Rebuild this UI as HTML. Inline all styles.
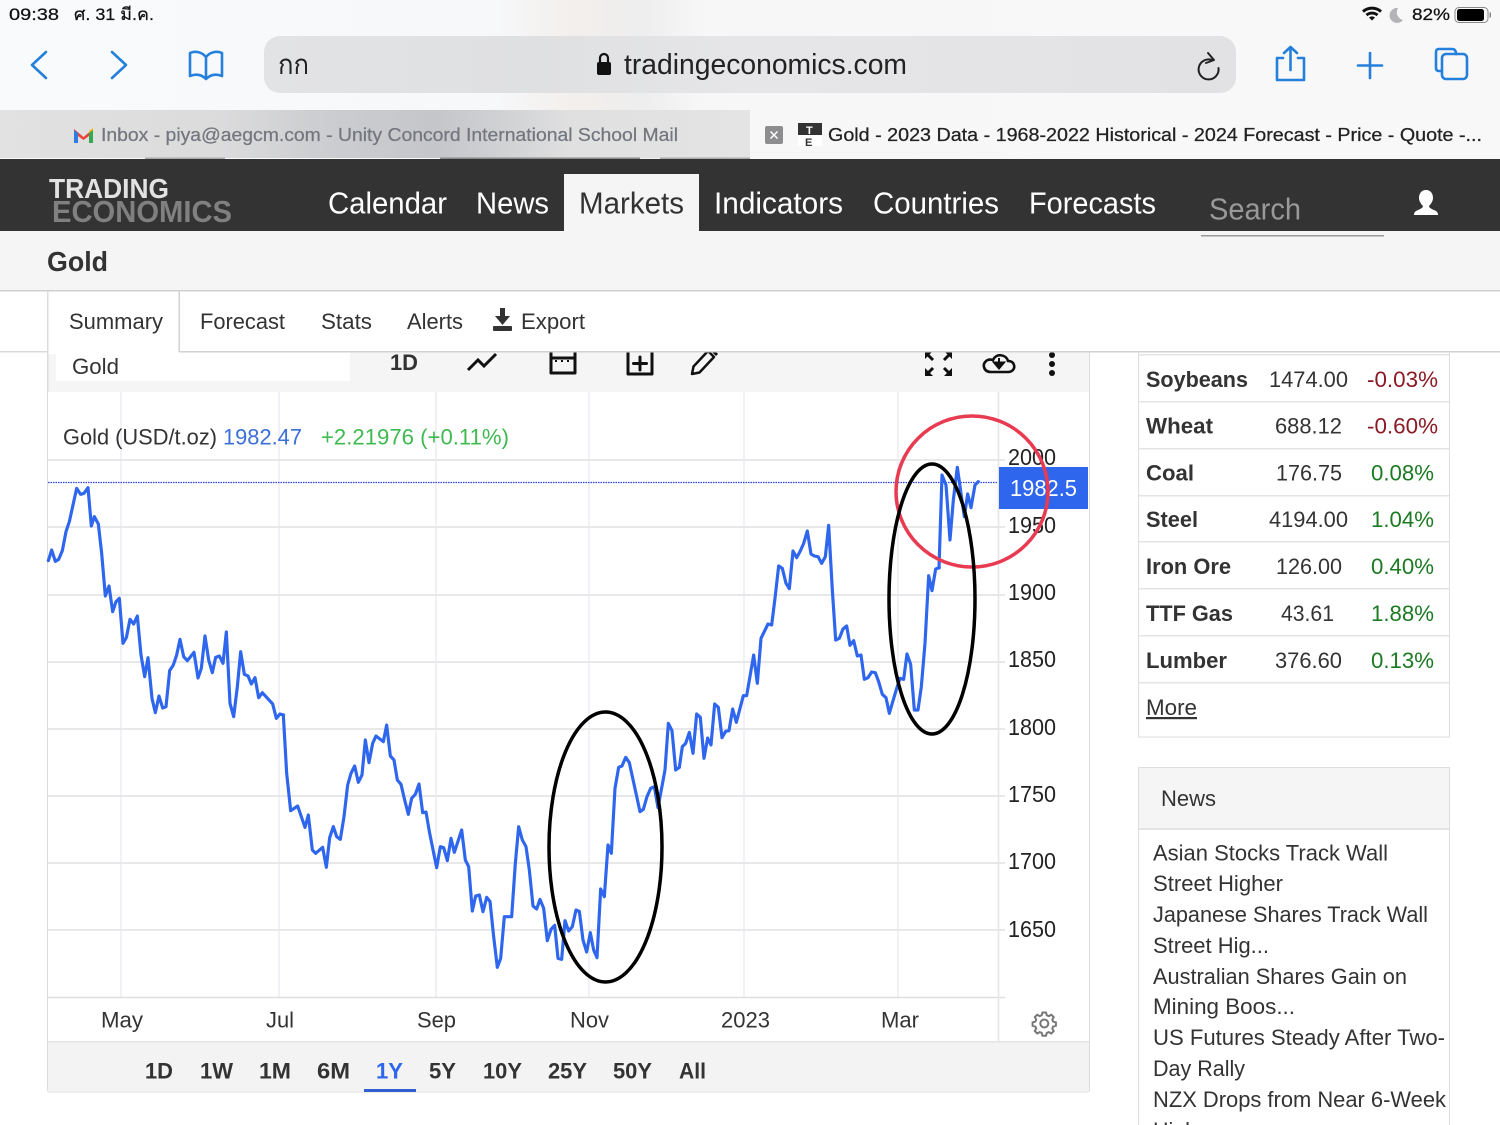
<!DOCTYPE html>
<html lang="th">
<head>
<meta charset="utf-8">
<title>Gold</title>
<style>
html,body{margin:0;padding:0;width:1500px;height:1125px;overflow:hidden;background:#fff}
svg{display:block;font-family:"Liberation Sans","Noto Sans CJK SC",sans-serif}
.r{font-size:22px;fill:#333}
.b{font-size:22px;fill:#333;font-weight:700}
.nav{font-size:31px;fill:#fff}
.ax{font-size:23px;fill:#222}
.red{font-size:22px;fill:#8b1a24}
.grn{font-size:22px;fill:#1c7a22}
.st{font-size:17px;fill:#111;stroke:#111;stroke-width:.25}
.grid{stroke:#e8e8ea;stroke-width:2}
.v{stroke:#f1f1f6;stroke-width:2}
.ic{fill:none;stroke:#2580dc;stroke-width:2.6;stroke-linecap:round;stroke-linejoin:round}
.k{fill:none;stroke:#111;stroke-width:3;stroke-linecap:round;stroke-linejoin:round}
.gl{fill:none;stroke:#2f66ee;stroke-width:9.5;stroke-linejoin:round;stroke-linecap:round}
</style>
</head>
<body>
<svg width="1500" height="1125" viewBox="0 0 1500 1125" xmlns="http://www.w3.org/2000/svg">
<defs>
<linearGradient id="top" x1="0" x2="1" y1="0" y2="0">
<stop offset="0" stop-color="#f8fafc"/><stop offset=".33" stop-color="#f7f8fa"/><stop offset=".38" stop-color="#f3efec"/><stop offset=".43" stop-color="#eeeeee"/><stop offset=".47" stop-color="#f7f7f8"/><stop offset="1" stop-color="#f8f8f9"/>
</linearGradient>
<linearGradient id="bar" x1="0" x2="1" y1="0" y2="0">
<stop offset="0" stop-color="#e2e3e5"/><stop offset=".28" stop-color="#dfe0e2"/><stop offset=".5" stop-color="#e6e6e8"/><stop offset="1" stop-color="#e2e2e4"/>
</linearGradient>
<linearGradient id="tab" x1="0" x2="1" y1="0" y2="0">
<stop offset="0" stop-color="#e2e2e2"/><stop offset=".3" stop-color="#dbdbdc"/><stop offset=".42" stop-color="#cdced1"/><stop offset=".58" stop-color="#c4c6ca"/><stop offset=".68" stop-color="#d2d3d5"/><stop offset=".76" stop-color="#e0e0e1"/><stop offset="1" stop-color="#e4e4e4"/>
</linearGradient>
</defs>

<!-- browser chrome -->
<rect width="1500" height="159" fill="url(#top)"/>
<text class="st" x="9" y="20" textLength="50" lengthAdjust="spacingAndGlyphs">09:38</text>
<text class="st" x="74" y="20" textLength="80" lengthAdjust="spacingAndGlyphs">ศ. 31 มี.ค.</text>
<text class="st" x="1412" y="20" textLength="38" lengthAdjust="spacingAndGlyphs">82%</text>
<path d="M1362 13.5a15 15 0 0 1 20 0l-2 2.2a12 12 0 0 0-16 0zM1365.5 17a10 10 0 0 1 13 0l-2 2.2a7 7 0 0 0-9 0zM1369 20.5a5 5 0 0 1 6 0l-3 3z" fill="#111" transform="translate(0 -3)"/>
<path d="M1398 8a7.5 7.5 0 1 0 5 12a8 8 0 0 1-5-12z" fill="#b4b4b6"/>
<rect x="1455" y="7.500" width="33" height="15" rx="4" fill="none" stroke="#888" stroke-width="1"/>
<rect x="1457" y="9" width="27" height="12" rx="2.500" fill="#000"/>
<rect x="1489.500" y="12.500" width="1.500" height="5" fill="#888"/>

<path class="ic" d="M46 52L32 65L46 78"/>
<path class="ic" d="M112 52L126 65L112 78"/>
<path class="ic" d="M206 57C201 51 194 51 190 53V76C195 74 201 74 206 79C211 74 217 74 222 76V53C218 51 211 51 206 57ZM206 57V78"/>
<rect x="264" y="36" width="972" height="57" rx="16" fill="url(#bar)"/>
<text x="278" y="74" font-size="28" fill="#222" textLength="31" lengthAdjust="spacingAndGlyphs">กก</text>
<rect x="597" y="62" width="14" height="13" rx="2" fill="#111"/>
<path d="M600 62V58a4 4 0 0 1 8 0V62" fill="none" stroke="#111" stroke-width="2.200"/>
<text x="624" y="74" font-size="29" fill="#222" textLength="283" lengthAdjust="spacingAndGlyphs">tradingeconomics.com</text>
<path d="M1212 60A10 10 0 1 0 1218.500 68" fill="none" stroke="#222" stroke-width="2" stroke-linecap="round"/>
<path d="M1208 53L1214 60L1206 63" fill="none" stroke="#222" stroke-width="2" stroke-linecap="round" stroke-linejoin="round"/>
<path class="ic" d="M1283 58H1277V80H1304V58H1298M1290.500 70V47M1284 53L1290.500 47L1297 53"/>
<path class="ic" d="M1370 53V78M1358 65.500H1382"/>
<path class="ic" d="M1441 71H1439Q1436 71 1436 68V52Q1436 49 1439 49H1452Q1456 49 1456 54"/>
<rect class="ic" x="1442" y="54" width="25" height="25" rx="4"/>

<!-- tabs -->
<rect x="0" y="110" width="750" height="48" fill="url(#tab)"/>
<rect x="145" y="157.500" width="80" height="1.500" fill="#aaa"/>
<rect x="440" y="157.500" width="200" height="1.500" fill="#888"/>
<rect x="660" y="157.500" width="90" height="1.500" fill="#aaa"/>
<path d="M74 143V129L83.500 137L93 129V143H89V136L83.500 140L78 136V143Z" fill="#ea4335"/>
<path d="M74 130V143H78V133Z" fill="#2f7de0"/>
<path d="M93 130V143H89V133Z" fill="#34a853"/>
<path d="M89 133L93 130V128L89 131Z" fill="#f9bb05"/>
<text x="101" y="141" font-size="18" fill="#74777e" stroke="#74777e" stroke-width=".25" textLength="577" lengthAdjust="spacingAndGlyphs">Inbox - piya@aegcm.com - Unity Concord International School Mail</text>
<rect x="765" y="126" width="18" height="18" rx="2" fill="#8d8d8f"/>
<path d="M770.500 131.500L777.500 138.500M777.500 131.500L770.500 138.500" stroke="#fff" stroke-width="1.500"/>
<rect x="798" y="123" width="24" height="12" fill="#333"/>
<rect x="798" y="135" width="24" height="11" fill="#fff"/>
<text x="806" y="134" font-size="11" font-weight="700" fill="#fff">T</text>
<text x="805" y="146" font-size="11" font-weight="700" fill="#333">E</text>
<text x="828" y="141" font-size="18" fill="#222" stroke="#222" stroke-width=".25" textLength="654" lengthAdjust="spacingAndGlyphs">Gold - 2023 Data - 1968-2022 Historical - 2024 Forecast - Price - Quote -...</text>

<!-- nav -->
<rect x="0" y="159" width="1500" height="72" fill="#333"/>
<text x="52" y="222" font-size="31" font-weight="700" fill="#808080" textLength="180" lengthAdjust="spacingAndGlyphs">ECONOMICS</text>
<text x="49" y="198" font-size="28" font-weight="700" fill="#e2e2e2" textLength="120" lengthAdjust="spacingAndGlyphs">TRADING</text>
<rect x="564" y="174" width="135" height="57" fill="#f5f5f5"/>
<text class="nav" x="328" y="213.500" textLength="119" lengthAdjust="spacingAndGlyphs">Calendar</text>
<text class="nav" x="476" y="213.500" textLength="73" lengthAdjust="spacingAndGlyphs">News</text>
<text class="nav" x="579" y="213.500" style="fill:#333" textLength="105" lengthAdjust="spacingAndGlyphs">Markets</text>
<text class="nav" x="714" y="213.500" textLength="129" lengthAdjust="spacingAndGlyphs">Indicators</text>
<text class="nav" x="873" y="213.500" textLength="126" lengthAdjust="spacingAndGlyphs">Countries</text>
<text class="nav" x="1029" y="213.500" textLength="127" lengthAdjust="spacingAndGlyphs">Forecasts</text>
<text class="nav" x="1209" y="219.500" style="fill:#999" textLength="92" lengthAdjust="spacingAndGlyphs">Search</text>
<path d="M1426 190c-5 0-7 4-7 8c0 3 2 6 4 8c0 2-3 3-6 4.500c-2 1-3 2-3 4.500h24c0-2.500-1-3.500-3-4.500c-3-1.500-6-2.500-6-4.500c2-2 4-5 4-8c0-4-2-8-7-8z" fill="#fff"/>

<!-- title bar -->
<rect x="0" y="231" width="1500" height="60" fill="#f5f5f5"/>
<rect x="1201" y="235" width="183" height="1.500" fill="#999"/>
<rect x="0" y="290" width="1500" height="1.500" fill="#cfcfcf"/>
<text x="47" y="271" font-size="28" font-weight="700" fill="#333" textLength="61" lengthAdjust="spacingAndGlyphs">Gold</text>

<!-- chart panel -->
<rect x="47.500" y="340" width="1042" height="752" fill="#fff" stroke="#dcdcdc" rx="2"/>
<rect x="48" y="345" width="1041" height="47" fill="#f5f5f5"/>
<rect x="56" y="345" width="294" height="36" fill="#fff"/>
<text class="r" x="72" y="374" textLength="47" lengthAdjust="spacingAndGlyphs">Gold</text>
<text class="b" x="390" y="370" textLength="28" lengthAdjust="spacingAndGlyphs">1D</text>
<path d="M468 370L478 360L484 366L496 354" fill="none" stroke="#111" stroke-width="3"/>
<path d="M551 345V373H575V345M551 358H575" class="k"/>
<path d="M555 361h2M561 361h2M567 361h2" stroke="#111" stroke-width="2"/>
<path d="M628 345V374H652V345" class="k"/>
<path d="M640 357V370M633.500 363.500H646.500" class="k"/>
<path d="M692 374L693.500 366.500L708 351L714 357L699.500 372.500Z" fill="none" stroke="#111" stroke-width="2.500" stroke-linejoin="round"/>
<path d="M711 349L717 355" stroke="#111" stroke-width="3"/>
<g fill="none" stroke="#111" stroke-width="3">
<path d="M927 354L933 360M944 360L950 354"/>
<path d="M933 368L928 373M944 368L949 373"/>
</g>
<g fill="#111">
<path d="M925 352h7l-7 7z"/>
<path d="M952 352h-7l7 7z"/>
<path d="M925 376h8l-8-8z"/>
<path d="M952 376h-8l8-8z"/>
</g>
<path d="M991 372H1008C1013 372 1015 368 1014 365C1013 361 1009 361 1008 361C1006 354 996 353 993 360C986 358 983 364 984 367C985 371 988 372 991 372Z" fill="none" stroke="#111" stroke-width="2.600"/>
<path d="M999 358V366M994 362.500L999 368.500L1004 362.500Z" stroke="#111" stroke-width="2" fill="#111"/>
<circle cx="1052" cy="355" r="3" fill="#111"/><circle cx="1052" cy="364" r="3" fill="#111"/><circle cx="1052" cy="373" r="3" fill="#111"/>

<!-- grid -->
<g>
<line class="v" x1="121" x2="121" y1="392" y2="997"/>
<line class="v" x1="279" x2="279" y1="392" y2="997"/>
<line class="v" x1="436" x2="436" y1="392" y2="997"/>
<line class="v" x1="589" x2="589" y1="392" y2="997"/>
<line class="v" x1="744" x2="744" y1="392" y2="997"/>
<line class="v" x1="898" x2="898" y1="392" y2="997"/>
<line class="grid" x1="48" x2="1005" y1="460" y2="460"/>
<line class="grid" x1="48" x2="1005" y1="527" y2="527"/>
<line class="grid" x1="48" x2="1005" y1="595" y2="595"/>
<line class="grid" x1="48" x2="1005" y1="662" y2="662"/>
<line class="grid" x1="48" x2="1005" y1="729" y2="729"/>
<line class="grid" x1="48" x2="1005" y1="796" y2="796"/>
<line class="grid" x1="48" x2="1005" y1="863" y2="863"/>
<line class="grid" x1="48" x2="1005" y1="930" y2="930"/>
<line x1="48" x2="1005" y1="997.500" y2="997.500" stroke="#dfdfdf" stroke-width="1.500"/>
<line x1="998.500" x2="998.500" y1="392" y2="1041" stroke="#e4e4e4" stroke-width="1.500"/>
<line x1="48" x2="998" y1="482.500" y2="482.500" stroke="#2b3fe0" stroke-width="1.200" stroke-dasharray="1.500 1"/>
</g>

<text class="r" x="63" y="444.500" textLength="154" lengthAdjust="spacingAndGlyphs">Gold (USD/t.oz)</text>
<text class="r" x="223" y="444.500" style="fill:#3a6fd8" textLength="79" lengthAdjust="spacingAndGlyphs">1982.47</text>
<text class="r" x="321" y="444.500" style="fill:#3fba50" textLength="188" lengthAdjust="spacingAndGlyphs">+2.21976 (+0.11%)</text>

<text class="ax" x="1008" y="465" textLength="48" lengthAdjust="spacingAndGlyphs">2000</text>
<text class="ax" x="1008" y="533" textLength="48" lengthAdjust="spacingAndGlyphs">1950</text>
<text class="ax" x="1008" y="600" textLength="48" lengthAdjust="spacingAndGlyphs">1900</text>
<text class="ax" x="1008" y="667" textLength="48" lengthAdjust="spacingAndGlyphs">1850</text>
<text class="ax" x="1008" y="735" textLength="48" lengthAdjust="spacingAndGlyphs">1800</text>
<text class="ax" x="1008" y="802" textLength="48" lengthAdjust="spacingAndGlyphs">1750</text>
<text class="ax" x="1008" y="869" textLength="48" lengthAdjust="spacingAndGlyphs">1700</text>
<text class="ax" x="1008" y="937" textLength="48" lengthAdjust="spacingAndGlyphs">1650</text>
<rect x="999" y="467" width="89" height="42" fill="#2f66ee"/>
<text x="1010" y="496" font-size="23" fill="#fff" textLength="67" lengthAdjust="spacingAndGlyphs">1982.5</text>

<!-- price line -->
<g transform="translate(40 340) scale(.33333)"><polyline class="gl" points="25,662 35,630 46,664 56,658 67,632 78,575 88,545 110,445 122,463 132,460 144,443 154,558 163,530 175,552 185,640 196,768 207,738 218,815 228,785 238,775 249,910 259,893 270,838 281,852 292,828 303,945 314,1010 324,953 336,1075 346,1118 357,1068 368,1104 378,1100 389,992 400,975 410,945 420,898 431,950 442,962 462,937 474,1014 484,985 495,888 506,960 517,998 527,952 538,948 549,970 559,876 570,1090 581,1130 592,1040 602,935 613,1003 624,1008 634,1032 645,1013 656,1073 667,1058 678,1070 698,1092 709,1135 720,1122 731,1125"/></g>
<g transform="translate(280 690) scale(.33333)"><polyline class="gl" points="10,75 20,250 32,362 53,348 75,412 85,375 97,480 107,490 128,472 139,532 149,443 160,410 170,440 181,448 192,380 203,285 213,250 224,228 235,277 246,255 256,150 267,218 278,160 288,138 310,155 320,105 331,198 342,210 352,270 363,283 374,330 385,373 395,325 406,313 417,282 428,368 438,366 449,430 470,533 481,470 491,473 502,512 513,445 523,487 545,420 556,510 566,530 577,663 587,618 598,615 609,665 620,622 630,634 641,740 652,832 662,805 673,680 695,680 706,520 716,410 727,450 738,470 748,540 759,648 770,657 780,628 791,655 802,752 813,718 824,706 834,805 845,808 855,692 866,723 877,710 888,660 898,664 909,750 920,786 931,728 941,780 951,803 962,597 973,620 984,465 994,490 1005,295 1016,232 1026,228 1037,202 1048,218 1080,365 1090,358 1101,320 1112,295 1123,290 1134,353 1155,240 1165,100 1176,122 1187,240 1198,232"/></g>
<g transform="translate(640 500) scale(.33333)"><polyline class="gl" points="118,802 127,740 137,730 148,697 159,760 170,642 181,652 192,775 203,714 213,735 224,612 235,622 246,713 257,694 267,692 278,627 289,667 310,587 320,587 341,465 352,550 363,415 384,372 395,375 405,295 416,198 427,205 438,250 448,266 459,153 470,173 480,155 491,130 502,93 513,162 523,168 534,170 545,190 556,170 566,76 577,270 587,420 598,415 609,387 620,378 630,436 641,422 652,468 663,465 673,538 684,533 695,516 706,518 716,545 727,583 738,593 748,640 770,565 780,535 791,538 801,462 812,493 823,630 834,630 844,560 855,430 866,227 876,272 887,207 898,203"/></g>
<g transform="translate(860 340) scale(.33333)"><polyline class="gl" points="237,684 246,405 258,435 270,600 280,480 292,382 303,460 313,530 323,462 333,503 345,435 355,425"/></g>

<!-- annotations -->
<ellipse cx="972" cy="491.500" rx="76" ry="75.500" fill="none" stroke="#e83a50" stroke-width="3.500"/>
<ellipse cx="932" cy="599" rx="43" ry="135" fill="none" stroke="#000" stroke-width="3.500"/>
<ellipse cx="605.500" cy="847" rx="56.500" ry="135" fill="none" stroke="#000" stroke-width="3.500"/>

<!-- x axis -->
<text class="r" x="101" y="1027.500" textLength="42" lengthAdjust="spacingAndGlyphs">May</text>
<text class="r" x="266" y="1027.500" textLength="28" lengthAdjust="spacingAndGlyphs">Jul</text>
<text class="r" x="417" y="1027.500" textLength="39" lengthAdjust="spacingAndGlyphs">Sep</text>
<text class="r" x="570" y="1027.500" textLength="39" lengthAdjust="spacingAndGlyphs">Nov</text>
<text class="r" x="721" y="1027.500" textLength="49" lengthAdjust="spacingAndGlyphs">2023</text>
<text class="r" x="881" y="1027.500" textLength="38" lengthAdjust="spacingAndGlyphs">Mar</text>
<path d="M1042.500 1012.500h3.500l.8 2.800 2 .8 2.500-1.400 2.400 2.400-1.400 2.500.8 2 2.800.8v3.400l-2.800.8-.8 2 1.400 2.500-2.400 2.400-2.500-1.400-2 .8-.8 2.800h-3.500l-.8-2.800-2-.8-2.500 1.400-2.400-2.400 1.400-2.500-.8-2-2.800-.8v-3.400l2.800-.8.8-2-1.400-2.500 2.400-2.400 2.500 1.400 2-.8z" fill="none" stroke="#777" stroke-width="2"/>
<circle cx="1044.300" cy="1023.500" r="4" fill="none" stroke="#777" stroke-width="2"/>

<!-- range bar -->
<rect x="48" y="1041" width="1041" height="50" fill="#f3f3f3"/>
<rect x="48" y="1041" width="1041" height="1.500" fill="#e4e4e4"/>
<text class="b" x="145" y="1078.500" textLength="28" lengthAdjust="spacingAndGlyphs">1D</text>
<text class="b" x="200" y="1078.500" textLength="33" lengthAdjust="spacingAndGlyphs">1W</text>
<text class="b" x="259" y="1078.500" textLength="32" lengthAdjust="spacingAndGlyphs">1M</text>
<text class="b" x="317" y="1078.500" textLength="33" lengthAdjust="spacingAndGlyphs">6M</text>
<text class="b" x="376" y="1078.500" style="fill:#2f66ee" textLength="27" lengthAdjust="spacingAndGlyphs">1Y</text>
<text class="b" x="429" y="1078.500" textLength="27" lengthAdjust="spacingAndGlyphs">5Y</text>
<text class="b" x="483" y="1078.500" textLength="39" lengthAdjust="spacingAndGlyphs">10Y</text>
<text class="b" x="548" y="1078.500" textLength="39" lengthAdjust="spacingAndGlyphs">25Y</text>
<text class="b" x="613" y="1078.500" textLength="39" lengthAdjust="spacingAndGlyphs">50Y</text>
<text class="b" x="679" y="1078.500" textLength="27" lengthAdjust="spacingAndGlyphs">All</text>
<rect x="364" y="1089" width="52" height="3" fill="#2f5fd0"/>

<!-- right table -->
<rect x="1138.500" y="345" width="311" height="392" fill="#fff" stroke="#dedede"/>
<g fill="#e4e4e4">
<rect x="1139" y="354" width="310" height="1.500"/>
<rect x="1139" y="401" width="310" height="1.500"/>
<rect x="1139" y="448" width="310" height="1.500"/>
<rect x="1139" y="495" width="310" height="1.500"/>
<rect x="1139" y="541" width="310" height="1.500"/>
<rect x="1139" y="588" width="310" height="1.500"/>
<rect x="1139" y="635" width="310" height="1.500"/>
<rect x="1139" y="682" width="310" height="1.500"/>
</g>
<text class="b" x="1146" y="387" textLength="102" lengthAdjust="spacingAndGlyphs">Soybeans</text>
<text class="r" x="1269" y="387" textLength="79" lengthAdjust="spacingAndGlyphs">1474.00</text>
<text class="red" x="1367" y="387" textLength="71" lengthAdjust="spacingAndGlyphs">-0.03%</text>
<text class="b" x="1146" y="433.500" textLength="67" lengthAdjust="spacingAndGlyphs">Wheat</text>
<text class="r" x="1275" y="433.500" textLength="67" lengthAdjust="spacingAndGlyphs">688.12</text>
<text class="red" x="1367" y="433.500" textLength="71" lengthAdjust="spacingAndGlyphs">-0.60%</text>
<text class="b" x="1146" y="480.500" textLength="48" lengthAdjust="spacingAndGlyphs">Coal</text>
<text class="r" x="1276" y="480.500" textLength="66" lengthAdjust="spacingAndGlyphs">176.75</text>
<text class="grn" x="1371" y="480.500" textLength="63" lengthAdjust="spacingAndGlyphs">0.08%</text>
<text class="b" x="1146" y="527" textLength="52" lengthAdjust="spacingAndGlyphs">Steel</text>
<text class="r" x="1269" y="527" textLength="79" lengthAdjust="spacingAndGlyphs">4194.00</text>
<text class="grn" x="1371" y="527" textLength="63" lengthAdjust="spacingAndGlyphs">1.04%</text>
<text class="b" x="1146" y="574" textLength="85" lengthAdjust="spacingAndGlyphs">Iron Ore</text>
<text class="r" x="1276" y="574" textLength="66" lengthAdjust="spacingAndGlyphs">126.00</text>
<text class="grn" x="1371" y="574" textLength="63" lengthAdjust="spacingAndGlyphs">0.40%</text>
<text class="b" x="1146" y="621" textLength="87" lengthAdjust="spacingAndGlyphs">TTF Gas</text>
<text class="r" x="1281" y="621" textLength="53" lengthAdjust="spacingAndGlyphs">43.61</text>
<text class="grn" x="1371" y="621" textLength="63" lengthAdjust="spacingAndGlyphs">1.88%</text>
<text class="b" x="1146" y="668" textLength="81" lengthAdjust="spacingAndGlyphs">Lumber</text>
<text class="r" x="1275" y="668" textLength="67" lengthAdjust="spacingAndGlyphs">376.60</text>
<text class="grn" x="1371" y="668" textLength="63" lengthAdjust="spacingAndGlyphs">0.13%</text>
<text class="r" x="1146" y="715" text-decoration="underline" textLength="51" lengthAdjust="spacingAndGlyphs">More</text>

<!-- news panel -->
<rect x="1138.500" y="767.500" width="311" height="370" fill="#fff" stroke="#dedede"/>
<rect x="1139" y="768" width="310" height="60" fill="#f5f5f5"/>
<rect x="1139" y="828" width="310" height="2" fill="#e4e4e4"/>
<text class="r" x="1161" y="806" textLength="55" lengthAdjust="spacingAndGlyphs">News</text>
<text class="r" x="1153" y="860.500" textLength="235" lengthAdjust="spacingAndGlyphs">Asian Stocks Track Wall</text>
<text class="r" x="1153" y="891" textLength="130" lengthAdjust="spacingAndGlyphs">Street Higher</text>
<text class="r" x="1153" y="922" textLength="275" lengthAdjust="spacingAndGlyphs">Japanese Shares Track Wall</text>
<text class="r" x="1153" y="953" textLength="116" lengthAdjust="spacingAndGlyphs">Street Hig...</text>
<text class="r" x="1153" y="984" textLength="254" lengthAdjust="spacingAndGlyphs">Australian Shares Gain on</text>
<text class="r" x="1153" y="1014" textLength="142" lengthAdjust="spacingAndGlyphs">Mining Boos...</text>
<text class="r" x="1153" y="1045" textLength="292" lengthAdjust="spacingAndGlyphs">US Futures Steady After Two-</text>
<text class="r" x="1153" y="1076" textLength="92" lengthAdjust="spacingAndGlyphs">Day Rally</text>
<text class="r" x="1153" y="1107" textLength="293" lengthAdjust="spacingAndGlyphs">NZX Drops from Near 6-Week</text>
<text class="r" x="1153" y="1138" textLength="62" lengthAdjust="spacingAndGlyphs">High...</text>

<!-- sub tabs (over the chart toolbar) -->
<rect x="0" y="291.500" width="1500" height="60" fill="#fff"/>
<rect x="0" y="351" width="47" height="1.500" fill="#d8d8d8"/>
<rect x="179" y="351" width="1321" height="1.500" fill="#d2d2d2"/>
<rect x="47" y="291" width="1.500" height="101" fill="#dcdcdc"/>
<rect x="178.500" y="291" width="1.500" height="61" fill="#d2d2d2"/>
<rect x="48.500" y="351" width="130" height="3" fill="#fff"/>
<text class="r" x="69" y="329" textLength="94" lengthAdjust="spacingAndGlyphs">Summary</text>
<text class="r" x="200" y="329" textLength="85" lengthAdjust="spacingAndGlyphs">Forecast</text>
<text class="r" x="321" y="329" textLength="51" lengthAdjust="spacingAndGlyphs">Stats</text>
<text class="r" x="407" y="329" textLength="56" lengthAdjust="spacingAndGlyphs">Alerts</text>
<path d="M500 308H505V316H510L502.500 325L495 316H500Z" fill="#333"/>
<rect x="493" y="326" width="19" height="5" rx="1" fill="#333"/>
<text class="r" x="521" y="329" textLength="64" lengthAdjust="spacingAndGlyphs">Export</text>
</svg>
</body>
</html>
